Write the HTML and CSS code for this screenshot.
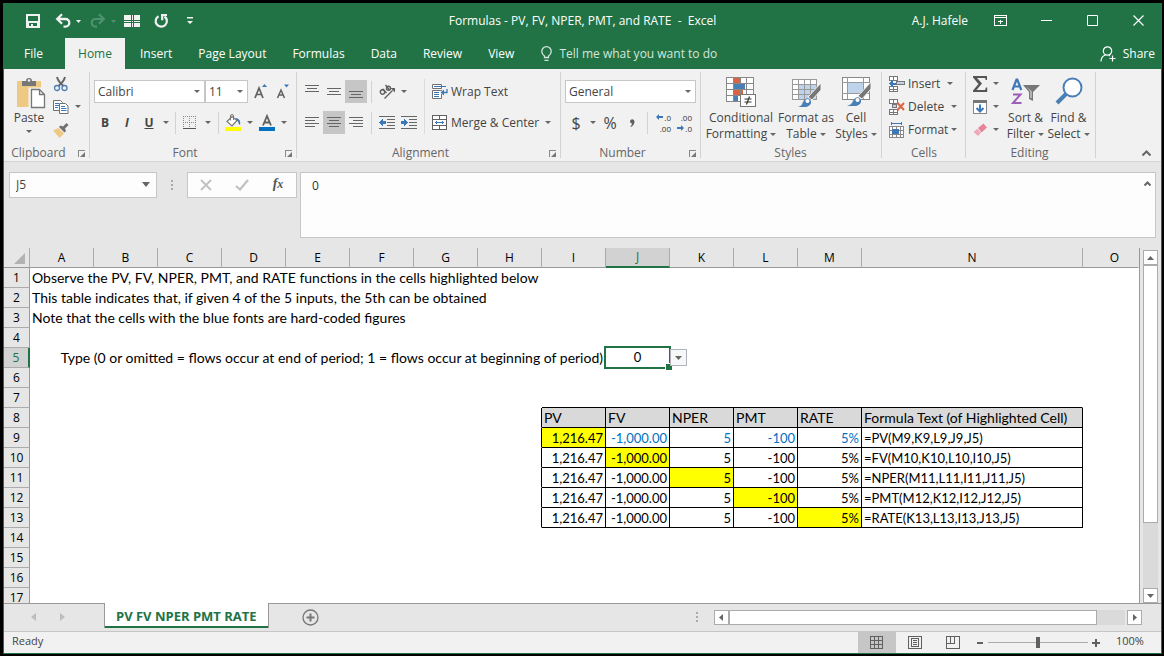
FILE: index.html
```html
<!DOCTYPE html>
<html lang="en">
<head>
<meta charset="utf-8">
<title>Formulas - PV, FV, NPER, PMT, and RATE - Excel</title>
<link rel="stylesheet" href="styles.css">
</head>
<body>
<div class="window">
  <header class="titlebar">
    <div class="quick">
      <button class="q-save" aria-label="Save"><svg width="16" height="16" viewBox="0 0 16 16"><path fill="#f1f1f1" fill-rule="evenodd" d="M1 1h14v14H1zM3 3v5h10V3zM4 10v3h2v-2h2v2h4v-3z"/></svg></button>
      <button class="q-undo" aria-label="Undo"><svg width="16" height="16" viewBox="0 0 16 16"><path fill="none" stroke="#f1f1f1" stroke-width="2.3" d="M2 6h8.5a3.7 3.7 0 0 1 0 7.6H8.5M7 1.2 2.2 6 7 10.8"/></svg></button>
      <button class="q-drop" aria-label="Undo list"><svg width="5" height="3"><path fill="#f1f1f1" d="M0 0h5L2.5 3z"/></svg></button>
      <button class="q-redo" aria-label="Redo"><svg width="16" height="16" viewBox="0 0 16 16"><path fill="none" stroke="#4f9270" stroke-width="2.2" d="M14 6H5.5a3.7 3.7 0 0 0 0 7.6H7M9 1.2 13.8 6 9 10.8"/></svg></button>
      <button class="q-drop" aria-label="Redo list"><svg width="5" height="3"><path fill="#4f9270" d="M0 0h5L2.5 3z"/></svg></button>
      <button class="q-panes" aria-label="Freeze panes"><svg width="16" height="14" viewBox="0 0 16 14" shape-rendering="crispEdges"><path fill="#f1f1f1" d="M0 1h7v5H0zM9 1h7v5H9zM0 8h7v5H0zM9 8h7v5H9z"/><path stroke="#f1f1f1" d="M8 1v12M0 7.5h16"/><path stroke="#217346" d="M7 1v12M9.5 1v12M0 6.5h16M0 8.5h16"/></svg></button>
      <button class="q-repeat" aria-label="Repeat"><svg width="16" height="16" viewBox="0 0 16 16"><path fill="none" stroke="#f1f1f1" stroke-width="2.2" d="M5.500 3.200a5.600 5.600 0 1 0 6 .3M8 2h6M9.200 1.200v6"/></svg></button>
      <button class="q-more" aria-label="Customize toolbar"><svg width="6" height="8"><path fill="#f1f1f1" d="M0 0h6v1.500H0zM0 4h6L3 7z"/></svg></button>
    </div>
    <h1 class="title">Formulas - PV, FV, NPER, PMT, and RATE&nbsp; -&nbsp; Excel</h1>
    <div class="controls">
      <span class="user">A.J. Hafele</span>
      <button aria-label="Ribbon display options"><svg width="13" height="11" fill="none" stroke="#fff" shape-rendering="crispEdges"><path d="M.5.5h12v10H.5zM0 2.500h13M6.500 9V4.500M4 6.500h5"/></svg></button>
      <button aria-label="Minimize"><svg width="11" height="11"><path stroke="#fff" d="M0 5.500h11"/></svg></button>
      <button aria-label="Maximize"><svg width="11" height="11"><path fill="none" stroke="#fff" d="M.5.5h10v10H.5z"/></svg></button>
      <button aria-label="Close"><svg width="11" height="11"><path stroke="#fff" stroke-width="1.200" d="m.5.5 10 10m0-10-10 10"/></svg></button>
    </div>
  </header>
  <nav class="tabs">
    <a class="file" href="#">File</a><a class="current" href="#">Home</a><a href="#">Insert</a><a href="#">Page Layout</a><a href="#">Formulas</a><a href="#">Data</a><a href="#">Review</a><a href="#">View</a>
    <button class="tell"><svg width="11" height="16" viewBox="0 0 11 16" fill="none" stroke="#d5e6dc" stroke-width="1.300"><path d="M3.500 11.500V10C1.500 8.500.8 7 .8 5.400a4.700 4.700 0 0 1 9.400 0C10.200 7 9.500 8.500 7.500 10v1.500zM3.500 14.300h4"/></svg>Tell me what you want to do</button>
    <button class="share"><svg width="16" height="16" viewBox="0 0 16 16" fill="none" stroke="#fff" stroke-width="1.200"><circle cx="7.500" cy="5" r="4.200"/><path d="M1 15.500C1 12 3 9.800 5.500 9M9 9.500l1 .5M12.500 9.500v6M9.500 12.500h6"/></svg>Share</button>
  </nav>

  <section class="ribbon">
    <div class="group clipboard">
      <div class="body">
        <button class="big"><svg width="30" height="32" viewBox="0 0 30 32"><path fill="#eec984" d="M1 4h24v26H1z"/><path fill="#f1f1f1" d="M12.500 10.500H30V32H14v-1.500h-1.500z"/><path fill="#777" d="M6 4h4c0-2 1-3 3-3s3 1 3 3h4v5H6z"/><circle cx="13" cy="3.500" r="1.300" fill="#f1f1f1"/><path fill="#fff" stroke="#777" stroke-width="1.300" d="M15.500 12.500h8l5 5V30.500h-13zM23.500 12.500v5h5"/></svg><span>Paste</span><i class="arr"></i></button>
        <div class="stack">
          <button aria-label="Cut"><svg width="16" height="16" viewBox="0 0 16 16" fill="none"><path stroke="#666" stroke-width="2" d="M4 1c1 4 3 6 6.500 9M12 1c-1 4-3 6-6.500 9"/><circle cx="4" cy="12" r="2.500" stroke="#4a7fb5" stroke-width="1.300"/><circle cx="11.500" cy="12" r="2.500" stroke="#4a7fb5" stroke-width="1.300"/></svg></button>
          <button aria-label="Copy"><svg width="16" height="16" viewBox="0 0 16 16" fill="#fff" stroke="#707070"><path d="M.5 1.500h7l2 2v8h-9z"/><path stroke="#3c78b8" d="M2 4.500h4M2 6.500h4M2 8.500h3"/><path d="M6.500 4.500h6l2.500 2.500v7.500H6.500z"/><path stroke="#3c78b8" d="M8 7.500h4M8 9.500h5.500M8 11.500h5.500"/></svg><i class="arr"></i></button>
          <button aria-label="Format Painter"><svg width="16" height="16" viewBox="0 0 16 16"><path fill="#eec984" d="m0 8.500 5.500-2.500 5.500 5.500L6.500 16z"/><path fill="#707070" d="m6 5 1.500-1.500 2.500 1L13.500 1l2 2L12 6.500l1 2.500-1.500 1.500z"/></svg></button>
        </div>
      </div>
      <div class="label">Clipboard<button class="launch" aria-label="Clipboard options"></button></div>
    </div>

    <div class="group font">
      <div class="rows">
        <div class="row">
          <label class="pick face"><select aria-label="Font"><option>Calibri</option></select></label>
          <label class="pick size"><select aria-label="Font size"><option>11</option></select></label>
          <button class="w22 grow" aria-label="Increase font size"><svg width="16" height="16" viewBox="0 0 16 16"><path fill="none" stroke="#606060" stroke-width="1.700" d="M2 14 6 4l4 10M3.500 10.500h5"/><path fill="#3c78b8" d="m9 3 2.500-3L14 3z"/></svg></button>
          <button class="w22" aria-label="Decrease font size"><svg width="16" height="16" viewBox="0 0 16 16"><path fill="none" stroke="#606060" stroke-width="1.500" d="M2.500 14 6 6l3.500 8M4 11h4"/><path fill="#3c78b8" d="M9 .5h5l-2.500 3z"/></svg></button>
        </div>
        <div class="row">
          <button class="w22 bold">B</button><button class="w22 italic">I</button><button class="w22 under">U</button><button class="w12" aria-label="Underline style"><i class="arr"></i></button>
          <span class="sep"></span>
          <button class="w22" aria-label="Borders"><svg width="14" height="14" viewBox="0 0 14 14" stroke="#888" shape-rendering="crispEdges"><path stroke-dasharray="1 1" d="M0 .5h13M0 6.500h13M.5 0v13M6.500 0v13M12.500 0v13"/><path stroke="#555" d="M0 12.500h13"/></svg></button><button class="w14" aria-label="Border style"><i class="arr"></i></button>
          <span class="sep"></span>
          <button class="w22" aria-label="Fill color"><svg width="16" height="17" viewBox="0 0 16 17"><path fill="#fff" stroke="#777" stroke-width="1.200" d="M2 7.500 7 2.500l5 4-5 5.500z"/><path fill="none" stroke="#777" d="M5.500 6.500V2a1.500 1.500 0 0 1 3 0v4"/><path fill="#4472a8" d="M10 4c4 0 6 3 5 7l-1.500-1.500V8L12 6.500z"/><path fill="#ff0" d="M0 13h16v4H0z"/></svg></button><button class="w12" aria-label="Fill palette"><i class="arr"></i></button>
          <button class="w22" aria-label="Font color"><svg width="16" height="17" viewBox="0 0 16 17"><path fill="none" stroke="#606060" stroke-width="1.800" d="M4 11.500 8 2l4 9.500M5.500 8.500h5"/><path fill="#0070c0" d="M0 13h16v4H0z"/></svg></button><button class="w12" aria-label="Font palette"><i class="arr"></i></button>
        </div>
      </div>
      <div class="label">Font<button class="launch" aria-label="Font options"></button></div>
    </div>

    <div class="group align">
      <div class="body">
        <div class="rows">
          <div class="row">
            <button class="w22" aria-label="Top align"><svg class="ln" width="14" height="15"><path d="M0 1.500h14M2 4.500h10M0 7.500h14"/></svg></button><button class="w22" aria-label="Middle align"><svg class="ln" width="14" height="15"><path d="M0 4.500h14M2 7.500h10M0 10.500h14"/></svg></button><button class="w22 on" aria-label="Bottom align"><svg class="ln" width="14" height="15"><path d="M0 7.500h14M2 10.500h10M0 13.500h14"/></svg></button>
            <span class="sep wide"></span>
            <button class="w22" aria-label="Orientation"><svg width="17" height="16" viewBox="0 0 17 16" fill="none" stroke="#606060" stroke-width="1.400"><circle cx="3.500" cy="8" r="2.200"/><path d="m3.500 4.800 4 4.200M6.500 1l4 5"/><circle cx="9.500" cy="4.200" r="2"/><path stroke-width="1.300" d="m5.500 14.500 8-8"/><path stroke="none" fill="#606060" d="M16 4v4.500L11.500 4z"/></svg></button><button class="w12" aria-label="Orientation list"><i class="arr"></i></button>
          </div>
          <div class="row">
            <button class="w22" aria-label="Align left"><svg class="ln" width="14" height="15"><path d="M0 2.500h14M0 5.500h10M0 8.500h14M0 11.500h10"/></svg></button><button class="w22 on" aria-label="Center"><svg class="ln" width="14" height="15"><path d="M0 2.500h14M2 5.500h10M0 8.500h14M2 11.500h10"/></svg></button><button class="w22" aria-label="Align right"><svg class="ln" width="14" height="15"><path d="M0 2.500h14M4 5.500h10M0 8.500h14M4 11.500h10"/></svg></button>
            <span class="sep wide"></span>
            <button class="w22" aria-label="Decrease indent"><svg class="ln" width="16" height="13"><path d="M0 .5h16M8 3.500h8M8 6.500h8M8 9.500h8M0 12.500h16"/><path class="bl" d="M0 6.500 4 3v2h3v3H4v2z"/></svg></button><button class="w22" aria-label="Increase indent"><svg class="ln" width="16" height="13"><path d="M0 .5h16M8 3.500h8M8 6.500h8M8 9.500h8M0 12.500h16"/><path class="bl" d="M7 6.500 3 3v2H0v3h3v2z"/></svg></button>
          </div>
        </div>
        <span class="tallsep"></span>
        <div class="rows">
          <div class="row"><button class="txt"><svg width="16" height="16" viewBox="0 0 16 16" fill="#fff" stroke="#707070"><path d="M.5.5h9v4h-9zM.5 6.500h9v8h-9z"/><path stroke="#3c78b8" d="M2 2.500h12M2 8.500h5M2 10.500h5M2 12.500h5"/><path stroke="#f1f1f1" stroke-width="3" d="M15 8.500H9"/><path fill="none" stroke="#3c78b8" stroke-width="1.300" d="M15 5v3.500H10"/><path fill="#3c78b8" stroke="none" d="m8.500 8.500 3.500-3v6z"/></svg>Wrap Text</button></div>
          <div class="row"><button class="txt"><svg width="16" height="16" viewBox="0 0 16 16" fill="#fff" stroke="#606060" shape-rendering="crispEdges"><path d="M.5.5h14v14H.5zM0 4.500h15M0 10.500h15M7.500 0v4M7.500 11v4"/><path stroke="#3c78b8" d="M3 7.500h9M4.500 6v3M10.500 6v3"/></svg>Merge &amp; Center</button><button class="w18" aria-label="Merge list"><i class="arr"></i></button></div>
        </div>
      </div>
      <div class="label">Alignment<button class="launch" aria-label="Alignment options"></button></div>
    </div>

    <div class="group number">
      <div class="rows">
        <div class="row"><label class="pick format"><select aria-label="Number format"><option>General</option></select></label></div>
        <div class="row">
          <button class="w22 sym">$</button><button class="w12" aria-label="Currency list"><i class="arr"></i></button><button class="w22 sym">%</button><button class="w22 comma" aria-label="Comma style"><svg width="6" height="8"><path fill="#606060" d="M1 2a2.300 2.300 0 0 1 4.500.5C5.500 5 4 7 2 8L1.500 7C2.500 6.500 3 5.500 3 4.500 2 4.600 1 3.500 1 2z"/></svg></button>
          <span class="sep wide"></span>
          <button class="dec" aria-label="Increase decimal"><span><svg width="8" height="6"><path fill="#3c78b8" d="M0 3l3-3v2h4v2H3v2z"/></svg>.0</span><span>.00</span></button>
          <button class="dec" aria-label="Decrease decimal"><span>.00</span><span><svg width="8" height="6"><path fill="#3c78b8" d="M7 3 4 0v2H0v2h4v2z"/></svg>.0</span></button>
        </div>
      </div>
      <div class="label">Number<button class="launch" aria-label="Number options"></button></div>
    </div>

    <div class="group styles">
      <div class="body">
        <button class="big"><svg width="30" height="32" viewBox="0 0 30 32" shape-rendering="crispEdges"><path fill="#fff" d="M0 1h28v24H0z"/><path fill="#dc6244" d="M8 1h6v6H8zM8 13h9v6H8z"/><path fill="none" stroke="#888" d="M.5.5h27v24H.5zM0 6.500h28M0 12.500h28M0 18.500h28M7.500 0v24M14.500 0v24M20.500 0v24"/><path fill="#4a7fb5" d="M8 7h11v5H8zM8 19h4v5H8z"/><path fill="#fff" stroke="#777" d="M14.500 17.500h15v12h-15z"/><path stroke="#333" stroke-width="1.200" shape-rendering="auto" d="M18.500 22h7M18.500 25h7M20.500 27.500l3-8"/></svg><span>Conditional</span><span>Formatting <i class="arr"></i></span></button>
        <button class="big"><svg width="30" height="32" viewBox="0 0 30 32"><g shape-rendering="crispEdges"><path fill="#fff" d="M1 2h25v21H1z"/><path fill="#bfd3ea" d="M7 7h19v16H7z"/><path fill="none" stroke="#999" d="M1.500 2.500h24v20h-24zM1 7.500h25M1 12.500h25M1 17.500h25M7.500 2v21M13.500 2v21M19.500 2v21"/></g><path fill="#777" stroke="#f1f1f1" stroke-width="1" d="M30 6v7l-9 10-4-3z"/><path fill="#4a7fb5" d="M7 30c4-1 4-3 5-5 2-4 5-4.500 7-2.500 2.500 3 .5 6.500-4 7.500z"/><circle cx="16.500" cy="24" r="2" fill="#fff"/></svg><span>Format as</span><span>Table <i class="arr"></i></span></button>
        <button class="big"><svg width="30" height="32" viewBox="0 0 30 32"><g shape-rendering="crispEdges"><path fill="#fff" stroke="#888" d="M1.500.5h27v22h-27z"/><path fill="none" stroke="#999" d="M1 5.500h27M1 16.500h27M6.500 0v22M22.500 0v22"/><path fill="#bfd3ea" d="M7 6h15v10H7z"/></g><path fill="#777" stroke="#f1f1f1" d="M30 5v7l-9 10-4-3z"/><path fill="#4a7fb5" d="M6 29c4-1 5-3 6-5 2-4 5-4.500 7-2.500 2.500 3 .5 6.500-4 7.500z"/><circle cx="16.500" cy="23" r="2" fill="#fff"/></svg><span>Cell</span><span>Styles <i class="arr"></i></span></button>
      </div>
      <div class="label">Styles</div>
    </div>

    <div class="group cells">
      <div class="body"><div class="stack">
        <button class="txt"><svg width="16" height="16" viewBox="0 0 16 16" shape-rendering="crispEdges" fill="#fff" stroke="#777"><path d="M.5.5h8v4h-8zM4.500 0v5M.5 10.500h8v5h-8zM4.500 10v6M0 13.500h9"/><path fill="#bfd3ea" d="M7.500 5.500h8v3h-8z"/><path fill="#3c78b8" stroke="none" d="M0 7.500 4 4v2.500h3v2H4V11z"/></svg>Insert<i class="arr far"></i></button>
        <button class="txt"><svg width="16" height="16" viewBox="0 0 16 16" shape-rendering="crispEdges" fill="#fff" stroke="#777"><path d="M.5.5h8v4h-8zM4.500 0v5M.5 10.500h8v5h-8zM4.500 10v6M0 13.500h9"/><path fill="#bfd3ea" d="M3.500 5.500h4v3h-4z"/><path stroke="#dc6244" stroke-width="2" shape-rendering="auto" d="m8.500 4 6.500 7m0-7-6.500 7"/></svg>Delete<i class="arr far"></i></button>
        <button class="txt"><svg width="16" height="16" viewBox="0 0 16 16" shape-rendering="crispEdges" fill="#fff" stroke="#888"><path stroke="#3c78b8" d="M2 1.500h11M2.500 0v3M12.500 0v3"/><path d="M.5 4.500h14v11H.5zM0 8.500h15M0 12.500h15M3.500 4v11M7.500 4v11M11.500 4v11"/><path fill="#3c78b8" stroke="none" d="M3 7h7v5H3z"/></svg>Format<i class="arr near"></i></button>
      </div></div>
      <div class="label">Cells</div>
    </div>

    <div class="group editing">
      <div class="body">
        <div class="stack edits">
          <button aria-label="AutoSum"><svg width="16" height="16" viewBox="0 0 16 16"><path fill="#555" d="M1 0h14v4h-1.200l-.8-2H5l5 5.500L4.500 14H13l1-2.500h1.200V16H1v-1.500l5.500-6.500L1 1.500z"/></svg><i class="arr"></i></button>
          <button aria-label="Fill"><svg width="16" height="16" viewBox="0 0 16 16" shape-rendering="crispEdges"><path fill="#fff" stroke="#888" d="M1.500 1.500h13v13h-13z"/><path fill="#777" d="M1 1h14v3H1z"/><path fill="none" stroke="#3c78b8" stroke-width="2" shape-rendering="auto" d="M8 5.500v7M4.500 9 8 12.500 11.500 9"/></svg><i class="arr"></i></button>
          <button aria-label="Clear"><svg width="16" height="16" viewBox="0 0 16 16"><path fill="#e8849a" d="m6 6 5.500-4.500L15 5.500l-5.500 5z"/><path fill="#f0a8b6" d="m5.300 6.700 3.700 4L6 14 1.500 10z"/></svg><i class="arr"></i></button>
        </div>
        <button class="big"><svg width="30" height="32" viewBox="0 0 30 32" fill="none"><path stroke="#3c78b8" stroke-width="2.200" d="m1.500 13 4-10.500h.8l4 10.500M3 9.500h6"/><path stroke="#9b5fb8" stroke-width="2" d="M2 17.500h7.500L2 26h8.500"/><path fill="#777" d="M12 8h17l-7 7v9l-4-2v-7z"/><path fill="#f1f1f1" d="m15 9.500 4.500 4.800v6.500l1 .5v-7z"/></svg><span>Sort &amp;</span><span>Filter <i class="arr"></i></span></button>
        <button class="big"><svg width="30" height="32" viewBox="0 0 30 32"><path stroke="#4a7fb5" stroke-width="4" d="m3 26 9-9"/><circle cx="18.500" cy="10.500" r="9" fill="#fff" stroke="#4a7fb5" stroke-width="2"/></svg><span>Find &amp;</span><span>Select <i class="arr"></i></span></button>
      </div>
      <div class="label">Editing</div>
    </div>
    <button class="collapse" aria-label="Collapse ribbon"><svg width="9" height="6"><path fill="none" stroke="#666" stroke-width="2" d="m.5 5.500 4-4 4 4"/></svg></button>
  </section>

  <section class="formulabar">
    <label class="namebox"><select aria-label="Name box"><option>J5</option></select></label>
    <span class="grip"></span>
    <div class="fxbox">
      <button aria-label="Cancel"><svg width="12" height="12"><path stroke="#c0c0c0" stroke-width="1.800" d="m1 1 10 10m0-10L1 11"/></svg></button>
      <button aria-label="Enter"><svg width="14" height="12"><path fill="none" stroke="#c0c0c0" stroke-width="2.200" d="m1 7 4 3.500L13 1"/></svg></button>
      <button class="fx" aria-label="Insert function">f<small>x</small></button>
    </div>
    <div class="entry"><textarea aria-label="Formula">0</textarea><button aria-label="Collapse formula bar"><svg width="7" height="5"><path fill="none" stroke="#666" stroke-width="2" d="m.5 4.500 3-3 3 3"/></svg></button></div>
  </section>

  <main class="workspace">
    <div class="pane">
      <table class="sheet">
        <colgroup><col class="c-head"><col class="c" span="13"><col class="c-wide"><col></colgroup>
        <thead><tr><th class="corner"><svg width="11" height="11"><path fill="#b2b2b2" d="M11 0v11H0z"/></svg></th><th>A</th><th>B</th><th>C</th><th>D</th><th>E</th><th>F</th><th>G</th><th>H</th><th>I</th><th class="sel">J</th><th>K</th><th>L</th><th>M</th><th>N</th><th class="last">O</th></tr></thead>
        <tbody>
          <tr><th>1</th><td colspan="15">Observe the PV, FV, NPER, PMT, and RATE functions in the cells highlighted below</td></tr>
          <tr><th>2</th><td colspan="15">This table indicates that, if given 4 of the 5 inputs, the 5th can be obtained</td></tr>
          <tr><th>3</th><td colspan="15">Note that the cells with the blue fonts are hard-coded figures</td></tr>
          <tr><th>4</th><td colspan="15"></td></tr>
          <tr><th class="sel">5</th><td colspan="9" class="right">Type (0 or omitted = flows occur at end of period; 1 = flows occur at beginning of period)</td><td class="active">0<span class="ring"></span><button class="cell-drop" aria-label="Choose value"><svg width="7" height="4"><path fill="#666" d="M0 0h7L3.500 4z"/></svg></button></td><td colspan="5"></td></tr>
          <tr><th>6</th><td colspan="15"></td></tr>
          <tr><th>7</th><td colspan="8"></td><td colspan="6" class="above"></td><td></td></tr>
          <tr class="head"><th>8</th><td colspan="8" class="edge"></td><td>PV</td><td>FV</td><td>NPER</td><td>PMT</td><td>RATE</td><td>Formula Text (of Highlighted Cell)</td><td class="off"></td></tr>
          <tr class="data blue"><th>9</th><td colspan="8" class="edge"></td><td class="hi">1,216.47</td><td>-1,000.00</td><td>5</td><td>-100</td><td>5%</td><td class="f">=PV(M9,K9,L9,J9,J5)</td><td class="off"></td></tr>
          <tr class="data"><th>10</th><td colspan="8" class="edge"></td><td>1,216.47</td><td class="hi">-1,000.00</td><td>5</td><td>-100</td><td>5%</td><td class="f">=FV(M10,K10,L10,I10,J5)</td><td class="off"></td></tr>
          <tr class="data"><th>11</th><td colspan="8" class="edge"></td><td>1,216.47</td><td>-1,000.00</td><td class="hi">5</td><td>-100</td><td>5%</td><td class="f">=NPER(M11,L11,I11,J11,J5)</td><td class="off"></td></tr>
          <tr class="data"><th>12</th><td colspan="8" class="edge"></td><td>1,216.47</td><td>-1,000.00</td><td>5</td><td class="hi">-100</td><td>5%</td><td class="f">=PMT(M12,K12,I12,J12,J5)</td><td class="off"></td></tr>
          <tr class="data"><th>13</th><td colspan="8" class="edge"></td><td>1,216.47</td><td>-1,000.00</td><td>5</td><td>-100</td><td class="hi">5%</td><td class="f">=RATE(K13,L13,I13,J13,J5)</td><td class="off"></td></tr>
          <tr><th>14</th><td colspan="15"></td></tr>
          <tr><th>15</th><td colspan="15"></td></tr>
          <tr><th>16</th><td colspan="15"></td></tr>
          <tr><th>17</th><td colspan="15"></td></tr>
        </tbody>
      </table>
    </div>
    <div class="vscroll">
      <button aria-label="Scroll up"><svg width="7" height="4"><path fill="#666" d="M0 4h7L3.500 0z"/></svg></button>
      <div class="vtrack"><div class="vthumb"></div></div>
      <button aria-label="Scroll down"><svg width="7" height="4"><path fill="#666" d="M0 0h7L3.500 4z"/></svg></button>
    </div>
  </main>

  <div class="sheetbar">
    <div class="navs"><button aria-label="Previous sheet"><svg width="5" height="8"><path fill="#bdbdbd" d="M5 0v8L0 4z"/></svg></button><button aria-label="Next sheet"><svg width="5" height="8"><path fill="#bdbdbd" d="M0 0v8l5-4z"/></svg></button></div>
    <a class="sheettab" href="#">PV FV NPER PMT RATE</a>
    <button class="add" aria-label="New sheet"><svg width="17" height="17" viewBox="0 0 17 17"><circle cx="8.500" cy="8.500" r="7.500" fill="none" stroke="#777" stroke-width="1.300"/><path stroke="#777" stroke-width="2" d="M8.500 4.500v8M4.500 8.500h8"/></svg></button>
    <span class="grip"></span>
    <div class="hscroll">
      <button aria-label="Scroll left"><svg width="4" height="7"><path fill="#666" d="M4 0v7L0 3.500z"/></svg></button>
      <div class="htrack"><div class="hthumb"></div></div>
      <button aria-label="Scroll right"><svg width="4" height="7"><path fill="#666" d="M0 0v7l4-3.500z"/></svg></button>
    </div>
  </div>

  <footer class="status">
    <span class="ready">Ready</span>
    <button class="view on" aria-label="Normal view"><svg width="14" height="13" fill="none" stroke="#606060" shape-rendering="crispEdges"><path d="M.5.5h12v12H.5zM0 4.500h13M0 8.500h13M4.500 0v13M8.500 0v13"/></svg></button>
    <button class="view" aria-label="Page layout view"><svg width="14" height="13" fill="none" stroke="#606060" shape-rendering="crispEdges"><path d="M.5.5h13v12H.5zM3.500 2.500h7v8h-7zM5 4.500h4M5 6.500h4M5 8.500h4"/></svg></button>
    <button class="view" aria-label="Page break view"><svg width="14" height="13" fill="none" stroke="#606060" shape-rendering="crispEdges"><path d="M.5.5h13v12H.5zM.5 7.500h8V.5M4.500 0v7"/></svg></button>
    <button class="zb" aria-label="Zoom out"><svg width="8" height="8"><path stroke="#606060" stroke-width="2" d="M1 4h6"/></svg></button>
    <input class="zoom" type="range" min="0" max="100" value="50" aria-label="Zoom">
    <button class="zb" aria-label="Zoom in"><svg width="8" height="8"><path stroke="#606060" stroke-width="2" d="M0 4h8M4 0v8"/></svg></button>
    <span class="pct">100%</span>
  </footer>
</div>
</body>
</html>
```
FILE: styles.css
```css
* { box-sizing: border-box; }
body {
  margin: 0;
  height: 100vh;
  padding: 3px 2px 2px 3px;
  background: #000;
  color: #444;
  font: 12px/16px "Open Sans", "Noto Sans", sans-serif;
}
button {
  display: flex;
  align-items: center;
  justify-content: center;
  flex: none;
  margin: 0;
  padding: 0;
  border: 0;
  background: none;
  color: inherit;
  font: inherit;
  white-space: nowrap;
}
svg { display: block; flex: none; }
a { color: inherit; text-decoration: none; }
select {
  appearance: none;
  width: 100%;
  height: 100%;
  padding: 0 3px;
  border: 0;
  border-radius: 0;
  background: transparent;
  color: #444;
  font: inherit;
}
.window {
  display: flex;
  flex-direction: column;
  height: 100%;
  border: 1px solid #217346;
  background: #e6e6e6;
}

.titlebar {
  display: grid;
  grid-template-columns: 1fr auto 1fr;
  align-items: center;
  height: 34px;
  background: #217346;
  color: #fff;
}
.title { margin: 0; font: inherit; white-space: nowrap; }
.quick { display: flex; align-items: center; padding-left: 21px; }
.q-undo { margin-left: 14px; }
.q-drop { width: 14px; }
.q-redo { margin-left: 5px; }
.q-panes { margin-left: 4px; }
.q-repeat { margin-left: 13px; }
.q-more { margin-left: 18px; }
.controls { display: flex; align-items: center; justify-content: flex-end; }
.controls button { width: 46px; height: 30px; margin-bottom: 2px; }
.user { margin-right: 9px; white-space: nowrap; }

.tabs {
  display: flex;
  align-items: stretch;
  height: 31px;
  background: #217346;
  color: #fff;
}
.tabs a { padding: 8px 13px 0; }
.tabs a.file { padding-left: 20px; width: 61px; }
.tabs a.current { width: 60px; margin-right: 2px; padding: 8px 0 0; background: #f1f1f1; color: #217346; text-align: center; }
.tell { margin-left: 14px; gap: 7px; color: #d5e6dc; }
.share { margin-left: auto; padding-right: 6px; gap: 7px; }

.ribbon {
  display: flex;
  height: 93px;
  border-bottom: 1px solid #d4d4d4;
  background: #f1f1f1;
}
.group {
  display: flex;
  flex-direction: column;
  flex: none;
  padding: 3px 0 0 4px;
  border-right: 1px solid #d2d2d2;
  border-image: linear-gradient(#f1f1f1 4%, #d2d2d2 4%, #d2d2d2 96%, #f1f1f1 96%) 1;
  border-width: 0 1px 0 0;
}
.clipboard { width: 86px; }
.font { width: 207px; }
.align { width: 264px; }
.number { width: 140px; }
.styles { width: 181px; }
.cells { width: 84px; }
.editing { width: 130px; }
.body { display: flex; flex: 1; }
.label {
  position: relative;
  height: 16px;
  padding-right: 20px;
  color: #666;
  text-align: center;
}
.styles .label, .cells .label, .editing .label { padding-right: 6px; }
.launch {
  position: absolute;
  right: 4px;
  bottom: 4px;
  width: 7px;
  height: 7px;
  border: solid #888;
  border-width: 1px 0 0 1px;
}
.launch::after {
  content: "";
  position: absolute;
  right: 0;
  bottom: 0;
  border: solid #777;
  border-width: 0 0 5px 5px;
  border-left-color: transparent;
}
.arr {
  display: inline-block;
  flex: none;
  border: 3px solid transparent;
  border-top-color: #666;
  border-bottom: 0;
  vertical-align: middle;
}
.stack { display: flex; flex-direction: column; }
.stack button { height: 23px; justify-content: flex-start; gap: 3px; }
.big { flex-direction: column; justify-content: flex-start; padding-top: 5px; }
.big svg { margin-bottom: 1px; }
.big span { line-height: 16px; }
.clipboard .big { width: 42px; }
.clipboard .big svg { margin-left: 3px; }
.clipboard .big .arr { margin-top: 4px; }
.clipboard .stack { padding-left: 3px; }
.clipboard .stack button { gap: 6px; }
.rows { display: flex; flex-direction: column; gap: 8px; flex: 1; padding-top: 8px; }
.row { display: flex; align-items: center; height: 23px; }
.row button { height: 23px; }
.w12 { width: 12px; }
.w14 { width: 14px; }
.w18 { width: 18px; }
.w22 { width: 22px; }
.on { background: #c6c6c6; }
.sep { width: 1px; height: 22px; margin: 0 3px; background: #d2d2d2; }
.sep.wide { margin: 0 4px; }
.tallsep { width: 1px; height: 55px; margin: 7px 7px 0 0; background: #dcdcdc; }
.pick, .namebox { position: relative; display: block; height: 23px; border: 1px solid #c6c6c6; background: #fff; }
.pick::after, .namebox::after {
  content: "";
  position: absolute;
  top: 9px;
  right: 4px;
  border: 3px solid transparent;
  border-top-color: #666;
  border-bottom: 0;
}
.face { width: 111px; }
.size { width: 43px; }
.format { width: 131px; }
.grow { margin-left: 2px; }
.bold { font-weight: 700; }
.italic { font-style: italic; font-weight: 700; }
.under { font-weight: 700; text-decoration: underline; }
.ln { fill: none; stroke: #666; shape-rendering: crispEdges; }
.ln .bl { fill: #3c78b8; stroke: none; }
.align .rows { flex: none; }
.align .rows:first-child { width: 123px; }
.txt { gap: 3px; }
.sym { font-size: 16px; }
.dec {
  flex-direction: column;
  align-items: flex-end;
  width: 21px;
  padding-right: 2px;
  color: #333;
  font-size: 8px;
  line-height: 11px;
}
.dec span { display: flex; align-items: center; height: 11px; }
.styles { padding-left: 5px; }
.styles .big { width: 70px; }
.styles .big:nth-child(2) { width: 60px; }
.styles .big:nth-child(3) { width: 40px; }
.cells { padding-left: 7px; }
.far { margin-left: 4px; }
.edits { width: 34px; padding-left: 2px; }
.edits button { gap: 5px; }
.editing .big { width: 43px; }
.collapse { align-self: flex-end; margin: 0 10px 5px auto; }

.formulabar { display: flex; align-items: flex-start; padding: 10px 5px; }
.namebox { width: 148px; height: 26px; background: #fdfdfd; }
.namebox select { padding: 0 6px; }
.namebox::after { top: 9px; right: 6px; border-width: 5px 4px 0; }
.grip {
  width: 2px;
  height: 10px;
  margin: 8px 14px 0;
  background: repeating-linear-gradient(#aaa 0 2px, transparent 2px 4px);
}
.fxbox { display: flex; width: 110px; height: 26px; margin-right: 3px; border: 1px solid #c6c6c6; background: #fdfdfd; }
.fxbox button { flex: 1; }
.fxbox .fx { align-items: baseline; padding-top: 3px; color: #555; font: italic 700 14px/16px "Liberation Serif", serif; }
.fx small { font-size: 12px; }
.entry { display: flex; align-items: flex-start; flex: 1; height: 66px; border: 1px solid #c6c6c6; background: #fdfdfd; }
.entry textarea {
  flex: 1;
  height: 100%;
  padding: 5px 11px;
  border: 0;
  background: transparent;
  color: #333;
  font: inherit;
  resize: none;
}
.entry button { padding: 8px 4px; }

.workspace { display: flex; flex: 1; min-height: 0; }
.pane {
  flex: 1;
  min-width: 0;
  overflow: hidden;
  background: linear-gradient(#e6e6e6 20px, #fff 20px);
  border-right: 1px solid #999;
}
.sheet {
  width: 100%;
  table-layout: fixed;
  border-collapse: separate;
  border-spacing: 0;
  color: #000;
  font: 14px/19px Lato, "Open Sans", sans-serif;
}
.c-head { width: 26px; }
.c { width: 64px; }
.c-wide { width: 221px; }
.sheet th, .sheet td {
  height: 20px;
  padding: 0 2px;
  border: solid transparent;
  border-width: 0 1px 1px 0;
  font-weight: 400;
  text-align: left;
  white-space: nowrap;
}
.sheet th {
  padding: 0;
  background: #e6e6e6;
  border-color: #999;
  font: 12px/19px "Open Sans", sans-serif;
  text-align: center;
}
.sheet tbody th { padding-top: 1px; border-bottom-color: #ababab; line-height: 18px; }
.sheet thead th { border-right-color: #ababab; }
.sheet thead th.last { border-right-color: #e6e6e6; padding-left: 8px; }
.sheet .corner svg { margin: 2px 0 0 10px; }
.sheet thead th.sel { border-bottom: 2px solid #217346; background: #d2d2d2; color: #217346; line-height: 18px; }
.sheet tbody th.sel { border-right: 2px solid #217346; background: #d2d2d2; color: #217346; }
.sheet td.right { text-align: right; }
.sheet td.active { position: relative; padding: 0; text-align: center; font-size: 13px; }
.ring { position: absolute; inset: -2px; border: 2px solid #217346; }
.ring::after {
  content: "";
  position: absolute;
  right: -3px;
  bottom: -3px;
  width: 6px;
  height: 6px;
  border: solid #fff;
  border-width: 1px 0 0 1px;
  background: #217346;
}
.cell-drop {
  position: absolute;
  left: 64px;
  top: 1px;
  width: 17px;
  height: 17px;
  border: 1px solid #b0b4ba;
  background: #f6f7f9;
}
.sheet td.above { border-bottom-color: #000; }
.sheet td.edge { border-right-color: #000; }
.head td:not(.edge):not(.off) { border-color: #000; background: #d9d9d9; }
.data td:not(.edge):not(.off) { padding-top: 1px; border-color: #000; font-size: 13px; line-height: 18px; text-align: right; }
.data td.f:not(.edge):not(.off) { text-align: left; }
.blue td { color: #0070c0; }
.blue td.f, .blue td.hi { color: #000; }
.sheet td.hi { background: #ff0; }

.vscroll { display: flex; flex-direction: column; width: 21px; padding: 2px 3px 0; }
.vscroll button, .hscroll button { width: 15px; height: 15px; border: 1px solid #ababab; background: #fff; }
.vtrack { flex: 1; background: #dadada; }
.vthumb { height: 80%; border: 1px solid #ababab; background: #fff; }

.sheetbar { display: flex; height: 28px; border-top: 1px solid #999; }
.navs { display: flex; width: 100px; padding-left: 15px; }
.navs button { width: 29px; height: 26px; }
.sheettab {
  height: 25px;
  margin-top: -1px;
  padding: 5px 11px 0;
  border: solid #999;
  border-width: 0 1px;
  background: #fff;
  box-shadow: inset 0 -2px #217346;
  color: #217346;
  font-size: 13px;
  font-weight: 700;
  white-space: nowrap;
}
.add { margin-left: 33px; height: 27px; }
.sheetbar .grip { margin: 8px 16px 0 auto; }
.hscroll { display: flex; width: 37%; padding: 6px 0; margin-right: 19px; }
.htrack { flex: 1; margin-right: 2px; background: #dadada; }
.hthumb { width: 93%; height: 15px; border: 1px solid #ababab; background: #fff; }

.status {
  display: flex;
  align-items: center;
  height: 22px;
  border-top: 1px solid #c6c6c6;
  background: #f1f1f1;
  font-size: 11px;
}
.ready { flex: 1; padding: 0 0 3px 8px; }
.view { width: 38px; height: 21px; }
.zb { width: 16px; height: 21px; }
.zoom { appearance: none; width: 100px; height: 12px; margin: 0; background: linear-gradient(#aaa, #aaa) center / 100% 1px no-repeat; }
.zoom::-webkit-slider-thumb { appearance: none; width: 4px; height: 11px; background: #606060; }
.pct { width: 57px; padding: 0 0 3px 12px; }
```
